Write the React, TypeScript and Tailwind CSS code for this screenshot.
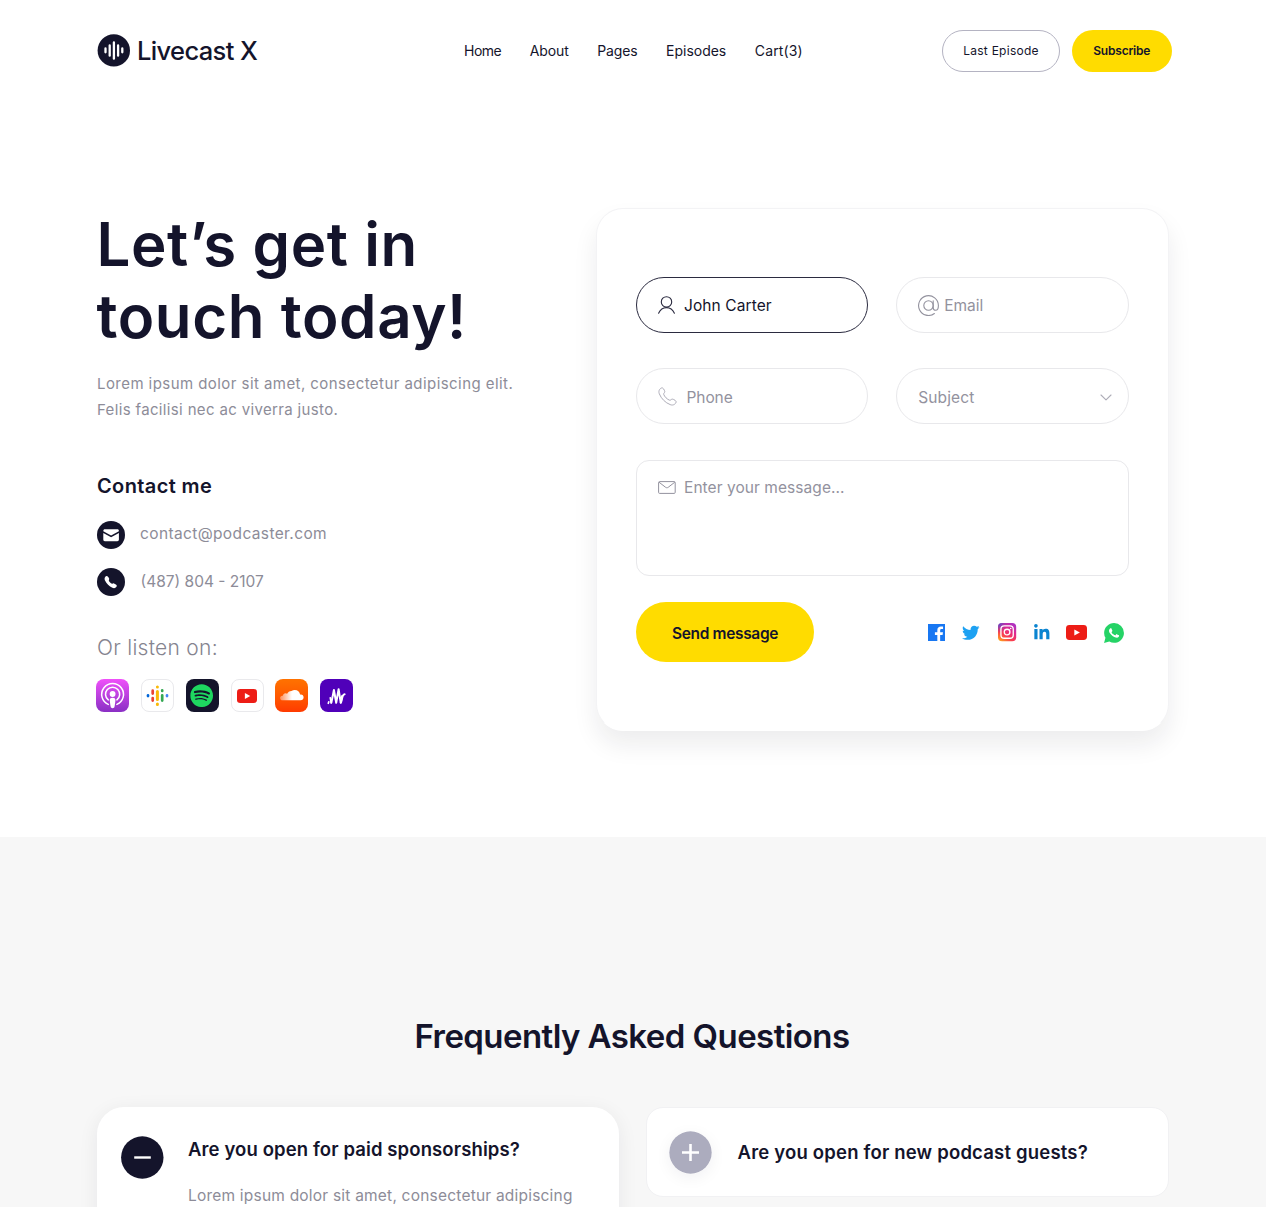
import type { ReactNode } from "react";
import { FaLinkedinIn, FaSpotify, FaTwitter } from "react-icons/fa";

const navLinks = [
  { label: "Home", tracking: "tracking-[-0.52px]" },
  { label: "About", tracking: "tracking-[-0.13px]" },
  { label: "Pages", tracking: "tracking-[-0.14px]" },
  { label: "Episodes", tracking: "tracking-[-0.01px]" },
  { label: "Cart(3)", tracking: "tracking-[0.13px]" },
];

function LogoMark() {
  return (
    <svg width="33" height="33" viewBox="0 0 33 33">
      <circle cx="16.8" cy="16.4" r="16.2" fill="#14142b" />
      <g stroke="#fff" strokeWidth="2.3" strokeLinecap="round">
        <path d="M8.500 14.500v3.800M12.700 11.500v10.200M16.900 8.500v16.200M21.100 11.500v10.200M25.300 14.500v3.800" />
      </g>
    </svg>
  );
}

function Header() {
  return (
    <header className="flex h-[42px] items-center">
      <div className="flex w-[367px] items-center">
        <LogoMark />
        <span className="ml-[7px] text-[25.5px] leading-8 font-[550] tracking-[-0.64px]">Livecast X</span>
      </div>
      <nav className="flex w-[478px] gap-[28.6px] pt-px text-[14px] leading-5">
        {navLinks.map((l) => (
          <a key={l.label} className={l.tracking}>
            {l.label}
          </a>
        ))}
      </nav>
      <button className="flex h-[42px] w-[118px] items-center justify-center rounded-full border border-[#b4b3c2] pt-px text-[12px] tracking-[0.25px]">
        Last Episode
      </button>
      <button className="ml-[11.5px] flex h-[42px] w-[100.5px] items-center justify-center rounded-full bg-[#ffdc00] pt-px text-[12px] font-semibold tracking-[-0.21px]">
        Subscribe
      </button>
    </header>
  );
}

function Tile({ className, children }: { className: string; children?: ReactNode }) {
  return <div className={`flex size-[33px] items-center justify-center overflow-hidden rounded-[8px] ${className}`}>{children}</div>;
}

function Platforms() {
  return (
    <div className="-ml-px flex gap-[11.85px]">
      <Tile className="bg-gradient-to-b from-[#f050fa] to-[#8a2fc4]">
        <svg width="33" height="33" viewBox="0 0 33 33" fill="none" stroke="#fff" strokeWidth="1.5" strokeLinecap="round">
          <path d="M12.300 25.400a10.900 10.900 0 1 1 8.600 0" />
          <path d="M12.300 20.900a7.100 7.100 0 1 1 8.600 0" />
          <circle cx="16.6" cy="15" r="2.9" fill="#fff" stroke="none" />
          <path
            d="M16.6 18.8c1.8 0 2.8.8 2.8 2.3 0 1.7-.5 5-.9 6.7-.2 1-.9 1.4-1.9 1.4s-1.7-.4-1.9-1.4c-.4-1.7-.9-5-.9-6.7 0-1.5 1-2.3 2.8-2.3z"
            fill="#fff"
            stroke="none"
          />
        </svg>
      </Tile>
      <Tile className="border border-[#e9e9ec] bg-white">
        <svg width="33" height="33" viewBox="0 0 33 33" className="shrink-0" strokeWidth="2.7" strokeLinecap="round">
          <path d="M7 16.3v.8" stroke="#0066d9" />
          <path d="M11.7 11.7v2.9M11.7 19v2.6" stroke="#ea4335" />
          <path d="M16.4 7.9v.1M16.4 12.5v8M16.4 25.1v.4" stroke="#fab908" strokeWidth="3" />
          <path d="M21.2 11.4v.6M21.2 16.3v5.3" stroke="#34a853" />
          <path d="M26 16.3v.8" stroke="#4285f4" />
        </svg>
      </Tile>
      <Tile className="bg-[#14142b]">
        <FaSpotify size={23.4} color="#1ed760" />
      </Tile>
      <Tile className="border border-[#e9e9ec] bg-white">
        <YoutubeIcon width={20} height={14} />
      </Tile>
      <Tile className="bg-gradient-to-b from-[#ff7200] to-[#ff3a00]">
        <svg width="33" height="33" viewBox="0 0 33 33">
          <defs>
            <linearGradient id="cloud" x1="5" x2="17" y1="0" y2="0" gradientUnits="userSpaceOnUse">
              <stop offset="0" stopColor="#fff" stopOpacity=".35" />
              <stop offset="1" stopColor="#fff" />
            </linearGradient>
          </defs>
          <path
            d="M16.5 12c1-.7 2.100-1.100 3.300-1.100 2.800 0 5 2 5.300 4.700 2.100-.4 3.500.9 3.500 2.700 0 1.700-1.300 3-2.900 3H7.500c-1.300 0-2.400-.9-2.400-2.300 0-1.500 1.200-2.500 2.700-2.200.3-1.700 1.300-2.600 2.600-2.600.8 0 1.300.2 1.700.6.8-1.500 2.200-2.800 4.400-2.800z"
            fill="url(#cloud)"
          />
        </svg>
      </Tile>
      <Tile className="bg-[#5000b9]">
        <svg width="33" height="33" viewBox="0 0 33 33" fill="none" stroke="#fff" strokeLinecap="round" strokeLinejoin="round">
          <path d="M8.300 24.300l.5-1.500M10.300 18.800l.9 5.200" strokeWidth="1.700" />
          <path d="M11.400 23.600l2.500-12.600 2.300 12.700 2.400-13.500 2.100 13.500 1.400-6.700" strokeWidth="2" />
          <path d="M20.800 23.500c1.600-1.800.8-8 3.800-8.200" strokeWidth="2" />
        </svg>
      </Tile>
    </div>
  );
}

function YoutubeIcon({ width, height, className = "" }: { width: number; height: number; className?: string }) {
  return (
    <svg width={width} height={height} viewBox="0 0 21 15" preserveAspectRatio="none" className={`shrink-0 ${className}`}>
      <rect width="21" height="15" rx="3.4" fill="#ed1d16" />
      <path d="M8.300 4.400v6.200l5.600-3.100z" fill="#fff" />
    </svg>
  );
}

function Intro() {
  return (
    <section className="w-[499px] shrink-0">
      <h1 className="-ml-[0.5px] text-[60px] leading-[72px] font-semibold tracking-[0.6px]">
        Let’s get in
        <br />
        touch today!
      </h1>
      <p className="mt-[19px] text-[15px] leading-[26.5px] whitespace-nowrap text-[#8d8c98]">
        <span className="tracking-[0.44px]">Lorem ipsum dolor sit amet, consectetur adipiscing elit.</span>
        <br />
        <span className="tracking-[0.35px]">Felis facilisi nec ac viverra justo.</span>
      </p>
      <h2 className="mt-[48.5px] text-[20px] leading-[28px] font-semibold tracking-[0.38px]">Contact me</h2>
      <div className="mt-[21px] flex items-center">
        <svg width="28" height="28" viewBox="0 0 28 28">
          <circle cx="14" cy="14" r="14" fill="#14142b" />
          <path d="M6.300 9.900c0-1 .6-1.600 1.600-1.600h12.400c1 0 1.600.6 1.600 1.600v.3L14.100 14.500 6.300 10.200z" fill="#fff" />
          <path d="M6.300 12l7.800 4.200L21.900 12v6.600c0 1-.6 1.600-1.600 1.600H7.900c-1 0-1.600-.6-1.600-1.600z" fill="#fff" />
        </svg>
        <span className="mb-[3px] ml-[15px] text-[15.5px] leading-6 tracking-[0.37px] text-[#8d8c98]">contact@podcaster.com</span>
      </div>
      <div className="mt-[18.500px] flex items-center">
        <svg width="28" height="28" viewBox="0 0 28 28">
          <circle cx="14" cy="14" r="14" fill="#14142b" />
          <path
            d="M8 9.300c.7-1.100 1.700-1.500 2.600-.9.800.6 1.400 1.400 1.600 2.300.2.800-.6 1.400-.3 2.100.5 1.200 1.800 2.400 3.100 2.900.7.200 1.300-.5 2-.3 1 .3 1.900.9 2.500 1.700.6.900.200 1.800-.8 2.500-1 .7-2.100.7-3.300.2-3.200-1.400-5.900-4-7.400-7.200-.5-1.100-.6-2.300 0-3.300z"
            fill="#fff"
          />
        </svg>
        <span className="ml-[15.500px] text-[15.5px] leading-6 text-[#8d8c98]">(487) 804 - 2107</span>
      </div>
      <h3 className="mt-[38px] mb-[17.500px] text-[21px] leading-[28px] font-[350] tracking-[0.28px] text-[#85848f]">Or listen on:</h3>
      <Platforms />
    </section>
  );
}

function Socials() {
  return (
    <div className="flex items-center pt-px">
      <svg width="17.500" height="17.500" viewBox="0 0 18 18">
        <path d="M0 0h18v18H0z" fill="#1877f2" />
        <path
          d="M9.600 18v-6.800H7.100V8.400h2.500V6.300c0-2.500 1.500-3.800 3.700-3.800 1 0 1.900.1 2.200.2v2.500H14c-1.200 0-1.500.6-1.500 1.400v1.800h2.900l-.4 2.800h-2.500V18z"
          fill="#fff"
        />
      </svg>
      <FaTwitter size={17.500} color="#1da1f2" className="ml-[17px]" />
      <svg width="18.200" height="18.200" viewBox="0 0 18 18" className="ml-[18.500px]" fill="none" stroke="#fff" strokeWidth="1.300">
        <defs>
          <linearGradient id="ig" x1="2" y1="18" x2="14" y2="1" gradientUnits="userSpaceOnUse">
            <stop offset="0" stopColor="#ffa51e" />
            <stop offset=".35" stopColor="#fa3d4e" />
            <stop offset=".7" stopColor="#e0298c" />
            <stop offset="1" stopColor="#b030c0" />
          </linearGradient>
          <radialGradient id="ig-corner" cx="0" cy="0" r="10" gradientUnits="userSpaceOnUse">
            <stop offset="0" stopColor="#3a55d8" />
            <stop offset="1" stopColor="#8a3ac8" stopOpacity="0" />
          </radialGradient>
        </defs>
        <rect width="18" height="18" rx="4" fill="url(#ig)" stroke="none" />
        <rect width="18" height="18" rx="4" fill="url(#ig-corner)" stroke="none" />
        <rect x="2.900" y="2.900" width="12.200" height="12.200" rx="3.200" />
        <circle cx="9" cy="9" r="2.800" />
        <circle cx="12.600" cy="5.400" r=".8" fill="#fff" stroke="none" />
      </svg>
      <FaLinkedinIn size={17.500} color="#0a84d0" className="ml-[16px]" />
      <YoutubeIcon width={21} height={15} className="ml-[16px]" />
      <svg width="20" height="20" viewBox="0 0 24 24" className="ml-[17px]">
        <path
          d="M.057 24l1.687-6.163a11.867 11.867 0 0 1-1.587-5.946C.16 5.335 5.495 0 12.050 0a11.817 11.817 0 0 1 8.413 3.488 11.824 11.824 0 0 1 3.480 8.414c-.003 6.557-5.338 11.892-11.893 11.892a11.900 11.900 0 0 1-5.688-1.448L.057 24z"
          fill="#25d366"
        />
        <path
          d="M17.472 14.382c-.297-.149-1.758-.867-2.030-.967-.273-.099-.471-.148-.670.150-.197.297-.767.966-.940 1.164-.173.199-.347.223-.644.075-.297-.150-1.255-.463-2.390-1.475-.883-.788-1.480-1.761-1.653-2.059-.173-.297-.018-.458.130-.606.134-.133.298-.347.446-.520.149-.174.198-.298.298-.497.099-.198.050-.371-.025-.520-.075-.149-.669-1.612-.916-2.207-.242-.579-.487-.500-.669-.510-.173-.008-.371-.010-.570-.010-.198 0-.520.074-.792.372-.272.297-1.040 1.016-1.040 2.479 0 1.462 1.065 2.875 1.213 3.074.149.198 2.096 3.200 5.077 4.487.709.306 1.262.489 1.694.625.712.227 1.360.195 1.871.118.571-.085 1.758-.719 2.006-1.413.248-.694.248-1.289.173-1.413-.074-.124-.272-.198-.570-.347"
          fill="#fff"
        />
      </svg>
    </div>
  );
}

function ContactForm() {
  const field = "flex h-[56px] items-center rounded-full border pl-[21px] text-[15.5px]";
  return (
    <form className="h-[523px] w-[572.500px] shrink-0 rounded-[27px] border border-[#f3f3f5] border-b-white bg-white px-[39px] pt-[68px] shadow-[0_14px_24px_rgba(20,20,43,0.08)]">
      <div className="grid grid-cols-2 gap-x-[28px] gap-y-[35.500px]">
        <label className={`${field} border-[#2b2b40]`}>
          <svg width="17" height="18" viewBox="0 0 17 18" fill="none" stroke="#2b2b40" strokeWidth="1.100" strokeLinecap="round">
            <circle cx="8.500" cy="5.900" r="5.200" />
            <path d="M.6 17.300c1.500-3.500 4.400-5.700 7.900-5.700s6.400 2.200 7.900 5.700" />
          </svg>
          <span className="mt-[2px] ml-[9px] tracking-[0.09px]">John Carter</span>
        </label>
        <label className={`${field} border-[#e8e8eb] text-[#93929e]`}>
          <svg width="21" height="21" viewBox="0 0 21 21" className="mt-px" fill="none" stroke="#93929e" strokeWidth="1.100" strokeLinecap="round">
            <circle cx="10.500" cy="10.500" r="4.700" />
            <path d="M15.200 5.800v6.900c0 1.600 1 2.600 2.500 2.600 1.700 0 2.700-1.700 2.700-4.800A9.900 9.900 0 1 0 16.400 18.500" />
          </svg>
          <span className="mt-[2px] ml-[5px] tracking-[-0.04px]">Email</span>
        </label>
        <label className={`${field} border-[#e8e8eb] text-[#93929e]`}>
          <svg width="19" height="19" viewBox="0 0 19 19" className="mt-px" fill="none" stroke="#aeadb8" strokeWidth="1" strokeLinejoin="round">
            <path d="M1.700 2.400C2.900.7 4.600.3 5.500 1.800c.7 1.100 1.300 2.100 1.300 2.900 0 1-1.400 1.500-1.100 2.600.7 2.300 3.600 5.200 5.900 5.900 1.100.3 1.700-1.100 2.700-1.100.8 0 1.800.6 2.900 1.300 1.500.9 1.100 2.600-.6 3.800-1.200.9-2.800 1.100-4.400.4C7.500 15.900 3.100 11.500 1.300 6.800.7 5.200.8 3.600 1.700 2.400z" />
          </svg>
          <span className="mt-[3px] ml-[9.500px] tracking-[-0.08px]">Phone</span>
        </label>
        <label className={`${field} justify-between border-[#e8e8eb] pr-[16px] text-[#93929e]`}>
          <span className="mt-[3px] tracking-[0.12px]">Subject</span>
          <svg width="12" height="7" viewBox="0 0 12 7" className="mt-[2px]" fill="none" stroke="#aeadb8" strokeWidth="1.100" strokeLinecap="round" strokeLinejoin="round">
            <path d="M1 1l5 4.900L11 1" />
          </svg>
        </label>
      </div>
      <label className="mt-[35.500px] flex h-[116px] rounded-[13px] border border-[#e8e8eb] pt-[15px] pl-[21px] text-[15.5px] leading-6 text-[#93929e]">
        <svg width="18" height="13" viewBox="0 0 18 13" className="mt-[5px]" fill="none" stroke="#93929e" strokeWidth="1" strokeLinejoin="round">
          <rect x=".6" y=".6" width="16.600" height="11.800" rx="1" />
          <path d="M1 1.200l6.600 5.100c.8.600 1.800.6 2.600 0l6.600-5.100" />
        </svg>
        <span className="ml-[8px] tracking-[0.06px]">Enter your message...</span>
      </label>
      <div className="mt-[26.500px] flex items-center justify-between pr-[4.500px]">
        <button className="flex h-[60px] w-[178px] items-center justify-center rounded-full bg-[#ffdc00] pt-[3px] text-[15.5px] font-semibold tracking-[-0.34px]">
          Send message
        </button>
        <Socials />
      </div>
    </form>
  );
}

function Faq() {
  return (
    <section className="h-[370px] overflow-hidden bg-[#f7f7f7] pt-[179px]">
      <h2 className="ml-[414.500px] text-[33px] leading-[40px] font-semibold tracking-[-0.57px]">Frequently Asked Questions</h2>
      <div className="mt-[51px] flex items-start gap-[27px] pl-[97px]">
        <article className="flex h-[230px] w-[522px] rounded-[27px] bg-white pt-[29px] pl-[24px] shadow-[0_4px_20px_rgba(20,20,43,0.07)]">
          <svg width="43" height="43" viewBox="0 0 43 43">
            <circle cx="21.300" cy="21.500" r="21.200" fill="#14142b" />
            <path d="M13.200 21.500h16.600" stroke="#fff" strokeWidth="2.400" />
          </svg>
          <div className="ml-[24px]">
            <h3 className="text-[18.5px] leading-[27px] font-semibold tracking-[0.11px]">Are you open for paid sponsorships?</h3>
            <p className="mt-[18.500px] text-[15.5px] leading-[27px] tracking-[0.21px] whitespace-nowrap text-[#8d8c98]">
              Lorem ipsum dolor sit amet, consectetur adipiscing
            </p>
          </div>
        </article>
        <article className="flex h-[90px] w-[523px] items-center rounded-[17px] border border-[#f1f1f3] bg-white pl-[22px]">
          <div className="rounded-full shadow-[0_4px_16px_rgba(20,20,43,0.06)]">
            <svg width="43" height="43" viewBox="0 0 43 43">
              <circle cx="21.500" cy="21.500" r="21.200" fill="#acacbe" />
              <path d="M13 21.500h17M21.500 13v17" stroke="#fff" strokeWidth="2.600" />
            </svg>
          </div>
          <h3 className="mt-px ml-[25.500px] text-[18.5px] leading-[27px] font-semibold tracking-[0.19px]">Are you open for new podcast guests?</h3>
        </article>
      </div>
    </section>
  );
}

export default function App() {
  return (
    <div className="h-[1207px] w-[1266px] overflow-hidden bg-white font-['Inter',sans-serif] text-[#14142b]">
      <div className="h-[837px] pt-[29.500px] pl-[97px]">
        <Header />
        <main className="mt-[136px] flex">
          <Intro />
          <ContactForm />
        </main>
      </div>
      <Faq />
    </div>
  );
}
